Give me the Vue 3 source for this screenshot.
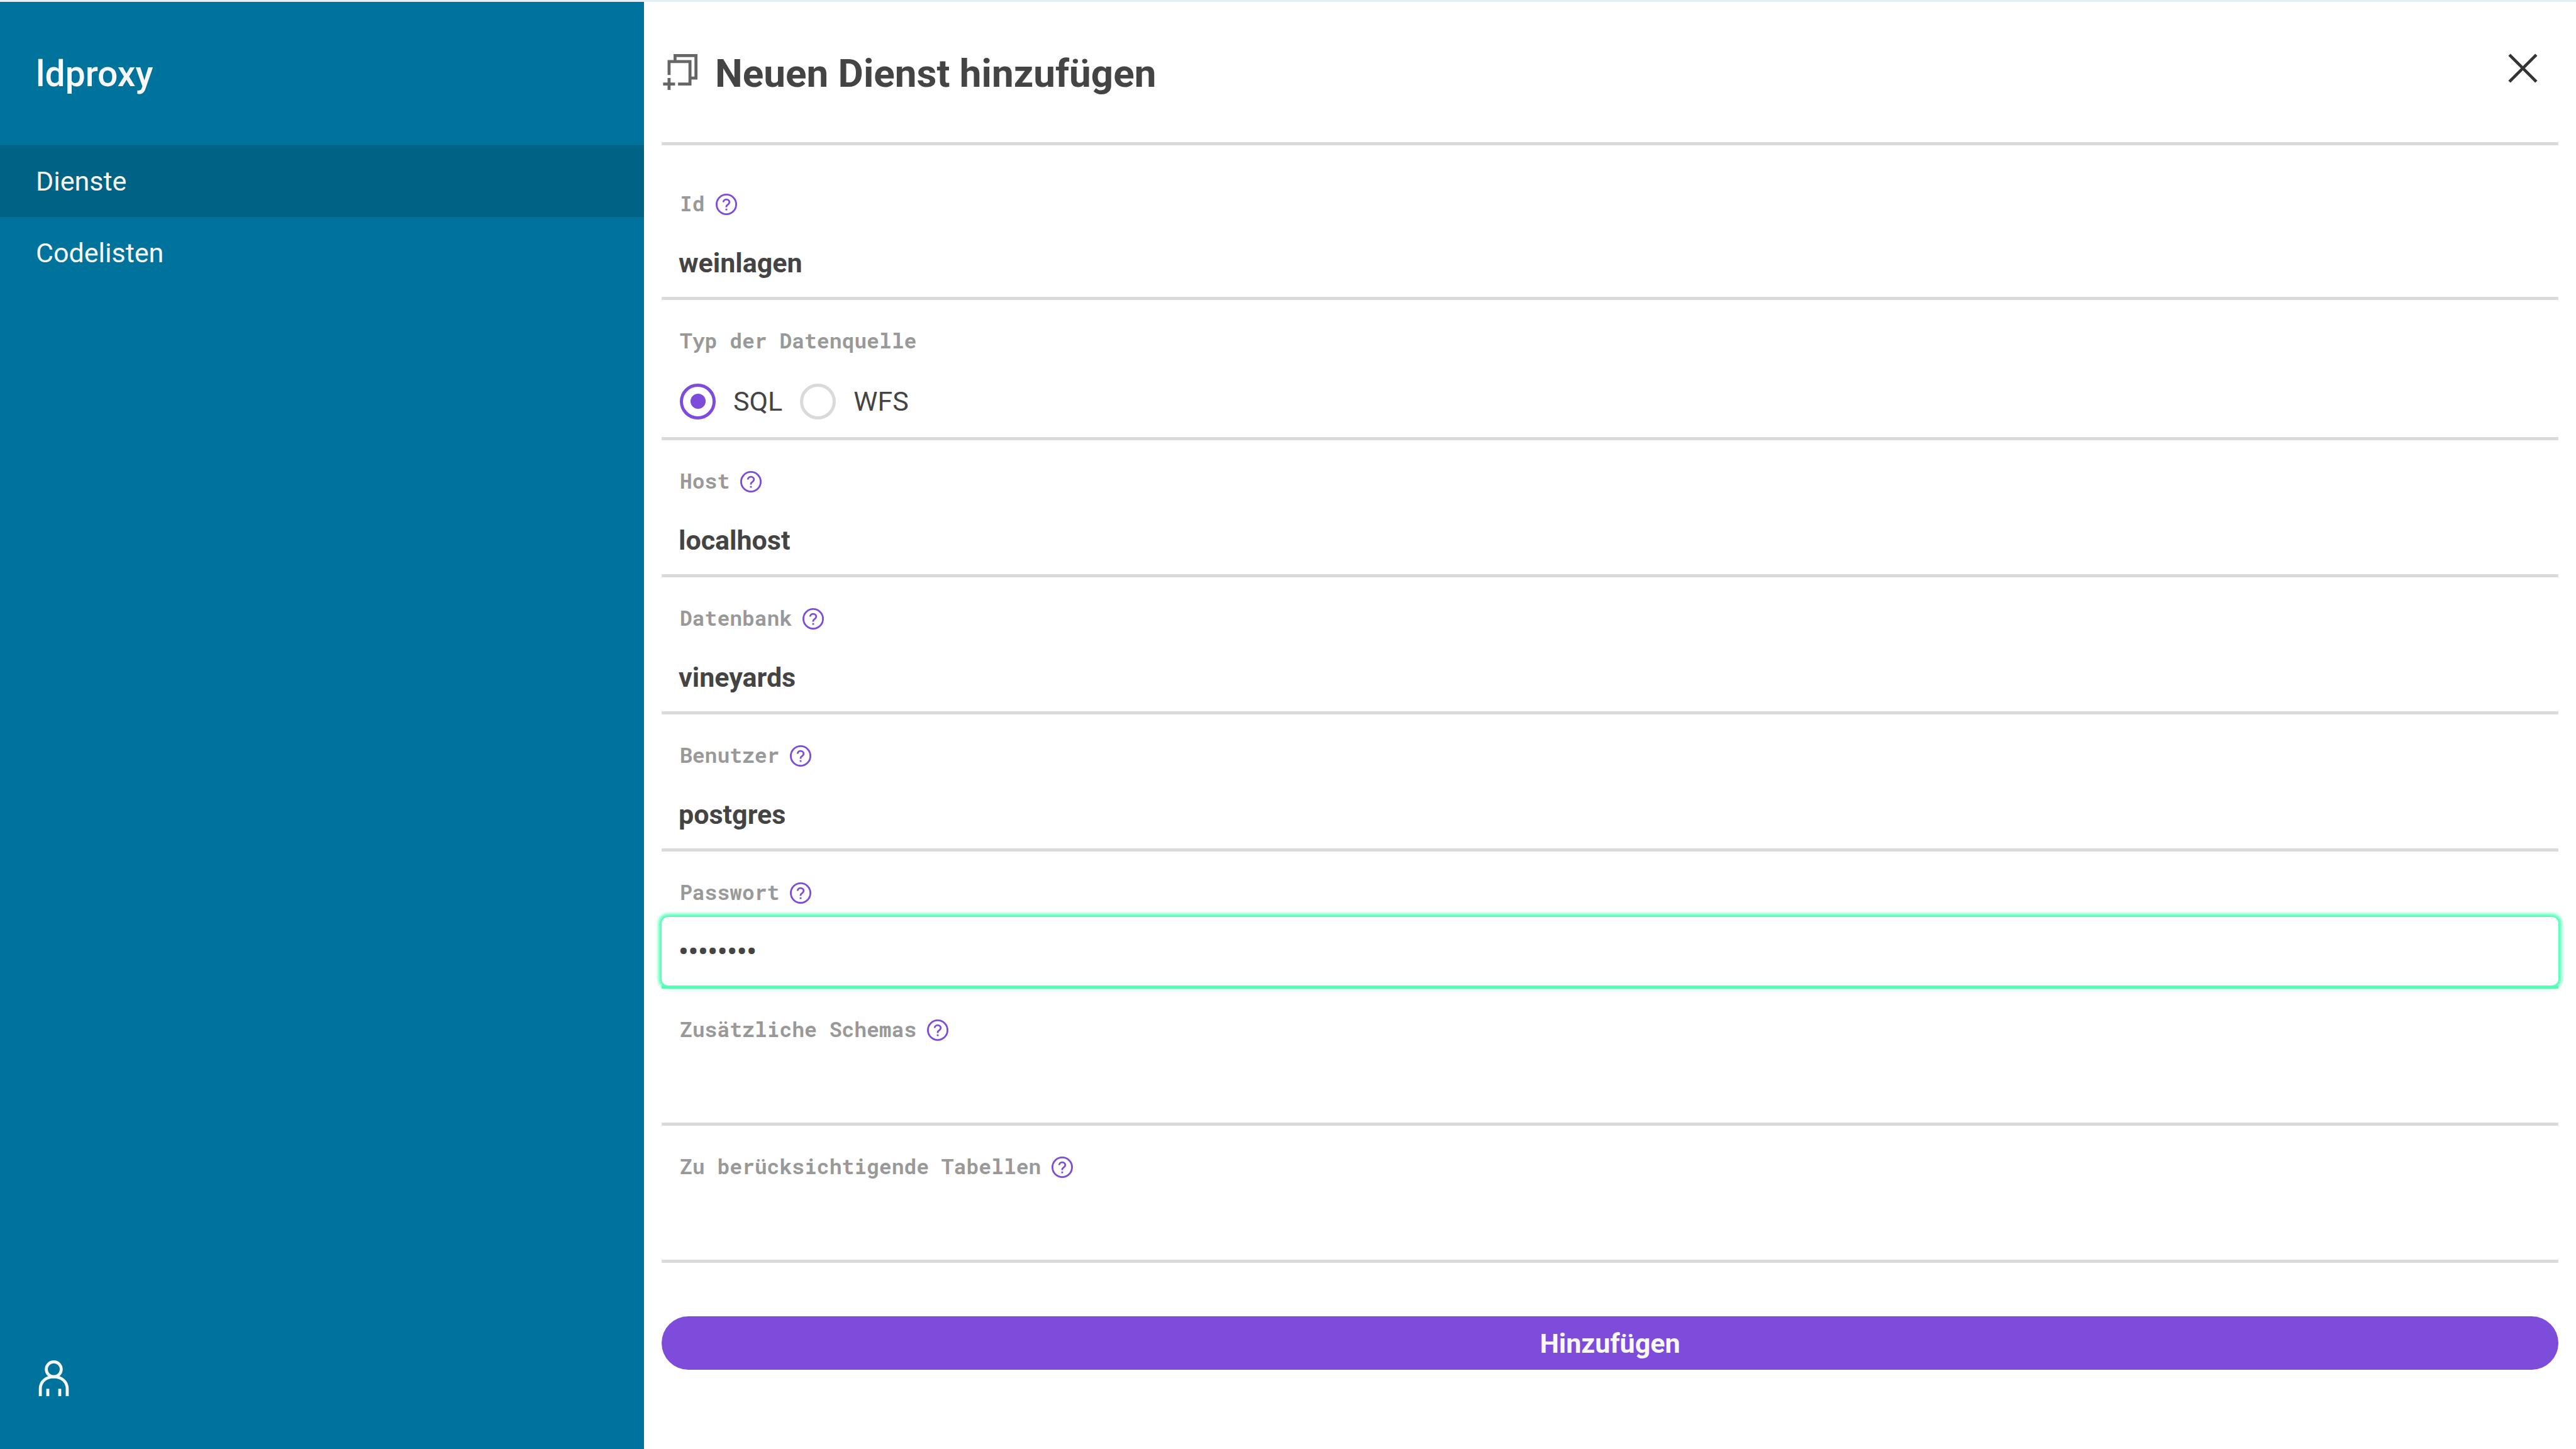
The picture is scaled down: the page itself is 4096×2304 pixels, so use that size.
<script setup>
import { reactive, ref } from 'vue'

const navigation = [
  { label: 'Dienste', active: true },
  { label: 'Codelisten', active: false },
]

const sourceTypes = ['SQL', 'WFS']
const sourceType = ref('SQL')

const fields = reactive([
  { id: 'id', label: 'Id', type: 'text', value: 'weinlagen', help: true },
  { id: 'type', label: 'Typ der Datenquelle', type: 'radio' },
  { id: 'host', label: 'Host', type: 'text', value: 'localhost', help: true },
  { id: 'database', label: 'Datenbank', type: 'text', value: 'vineyards', help: true },
  { id: 'user', label: 'Benutzer', type: 'text', value: 'postgres', help: true },
  { id: 'password', label: 'Passwort', type: 'password', value: 'postgres', help: true, focused: true },
  { id: 'schemas', label: 'Zusätzliche Schemas', type: 'text', value: '', help: true },
  { id: 'tables', label: 'Zu berücksichtigende Tabellen', type: 'text', value: '', help: true },
])
</script>

<template>
  <div class="app">
    <aside class="sidebar">
      <div class="brand">ldproxy</div>
      <nav class="nav">
        <a
          v-for="item in navigation"
          :key="item.label"
          href="#"
          class="nav-item"
          :class="{ active: item.active }"
        >{{ item.label }}</a>
      </nav>
      <button class="icon-button account" type="button" aria-label="Benutzerkonto">
        <svg class="icon" viewBox="0 0 24 24" aria-hidden="true">
          <circle cx="12" cy="6" r="5" />
          <path d="M8 24v-5M16 24v-5M3 24v-5c0-4.97 4.03-8 9-8s9 3.03 9 8v5" />
        </svg>
      </button>
    </aside>

    <main class="main">
      <header class="header">
        <svg class="icon title-icon" viewBox="0 0 24 24" aria-hidden="true">
          <path d="M9 4V1h14v15h-3M5 14V5h14v15h-8M1 20h8M5 16v8" />
        </svg>
        <h1 class="title">Neuen Dienst hinzufügen</h1>
        <button class="icon-button close" type="button" aria-label="Schließen">
          <svg class="icon" viewBox="0 0 24 24" aria-hidden="true">
            <path d="M3 3l18 18M3 21L21 3" />
          </svg>
        </button>
      </header>

      <form class="form" @submit.prevent>
        <div
          v-for="field in fields"
          :key="field.id"
          class="field"
          :role="field.type === 'radio' ? 'radiogroup' : null"
          :aria-labelledby="field.type === 'radio' ? field.id + '-label' : null"
        >
          <div class="label-row">
            <span v-if="field.type === 'radio'" :id="field.id + '-label'" class="label">{{ field.label }}</span>
            <label v-else :for="field.id" class="label">{{ field.label }}</label>
            <svg v-if="field.help" class="help" viewBox="0 0 24 24" aria-hidden="true">
              <circle cx="12" cy="12" r="11" />
              <path d="M8.600 9.600C8.600 8 10 6.400 12 6.400s3.400 1.500 3.400 3.100c0 1.600-1 2.200-2 2.900-.9.6-1.400 1-1.400 2v.8M12 16.700v2" />
            </svg>
          </div>

          <div v-if="field.type === 'radio'" class="control choices">
            <label v-for="name in sourceTypes" :key="name" class="choice">
              <input v-model="sourceType" type="radio" name="source-type" class="radio" :value="name" />
              <span>{{ name }}</span>
            </label>
          </div>
          <div v-else class="control" :class="{ focused: field.focused }">
            <input :id="field.id" v-model="field.value" class="input" :type="field.type" autocomplete="off" />
          </div>
        </div>

        <button class="submit" type="submit">Hinzufügen</button>
      </form>
    </main>
  </div>
</template>

<style>
html,
body {
  margin: 0;
  background: #ffffff;
}
</style>

<style scoped>
.app {
  display: flex;
  box-sizing: border-box;
  min-height: 100vh;
  border-top: 3px solid #e4eef5;
  color: #444444;
  font-family: Roboto, "Liberation Sans", sans-serif;
  font-size: 43px;
  line-height: 58px;
}

.sidebar {
  display: flex;
  flex: 0 0 25%;
  flex-direction: column;
  align-items: flex-start;
  background: #00739d;
  color: #f8f8f8;
}

.brand {
  height: 228px;
  padding-left: 57px;
  font-size: 57px;
  font-weight: 500;
  line-height: 230px;
}

.nav {
  display: flex;
  flex-direction: column;
  align-self: stretch;
}

.nav-item {
  padding: 28px 57px;
  color: inherit;
  text-decoration: none;
}

.nav-item.active {
  background: #006284;
}

.icon-button {
  display: flex;
  padding: 0;
  border: 0;
  background: none;
  color: inherit;
  cursor: pointer;
}

.icon {
  width: 57px;
  height: 57px;
  fill: none;
  stroke: currentColor;
  stroke-width: 2;
}

.account {
  margin: auto 57px 84px;
}

.main {
  flex: 1;
  min-width: 0;
  padding: 0 28px;
}

.header {
  display: flex;
  align-items: center;
  box-sizing: border-box;
  height: 228px;
  border-bottom: 5px solid #dadada;
}

.title-icon {
  color: #666666;
}

.title {
  flex: 1;
  margin: 0 28px;
  padding-top: 4px;
  font-size: 62px;
  font-weight: 700;
}

.close {
  padding: 0 28px 13px 0;
  color: #333333;
}

.form {
  padding-top: 28px;
}

.label-row {
  display: flex;
  align-items: center;
  gap: 17px;
  height: 44px;
  padding: 44px 29px 16px;
}

.label {
  padding-bottom: 4px;
  color: #999999;
  font-family: "Roboto Mono", "DejaVu Sans Mono", monospace;
  font-size: 33px;
  font-weight: 700;
  line-height: 40px;
}

.help {
  width: 34px;
  height: 34px;
  fill: none;
  stroke: #7d4cdb;
  stroke-width: 2;
}

.control {
  border-bottom: 5px solid #dadada;
}

.input {
  display: block;
  box-sizing: border-box;
  width: 100%;
  height: 109px;
  padding: 0 27px;
  border: 0;
  border-radius: 10px;
  outline: 0;
  background: transparent;
  color: inherit;
  font: inherit;
  font-weight: 700;
}

.focused {
  border-color: #50ffb5;
}

.focused .input {
  box-shadow: 0 0 5px 5px #50ffb5;
}

.choices {
  display: flex;
  gap: 28px;
  padding: 0 29px;
}

.choice {
  display: flex;
  align-items: center;
  gap: 28px;
  height: 114px;
}

.radio {
  display: grid;
  place-content: center;
  box-sizing: border-box;
  width: 57px;
  height: 57px;
  margin: 0;
  border: 5px solid #dadada;
  border-radius: 50%;
  appearance: none;
}

.radio:checked {
  border-color: #7d4cdb;
}

.radio:checked::before {
  width: 24px;
  height: 24px;
  border-radius: 50%;
  background: #7d4cdb;
  content: "";
}

.submit {
  display: block;
  width: 100%;
  height: 85px;
  margin-top: 85px;
  padding: 0;
  border: 0;
  border-radius: 43px;
  background: #7d4cdb;
  color: #f8f8f8;
  font: inherit;
  font-weight: 700;
  cursor: pointer;
}
</style>
